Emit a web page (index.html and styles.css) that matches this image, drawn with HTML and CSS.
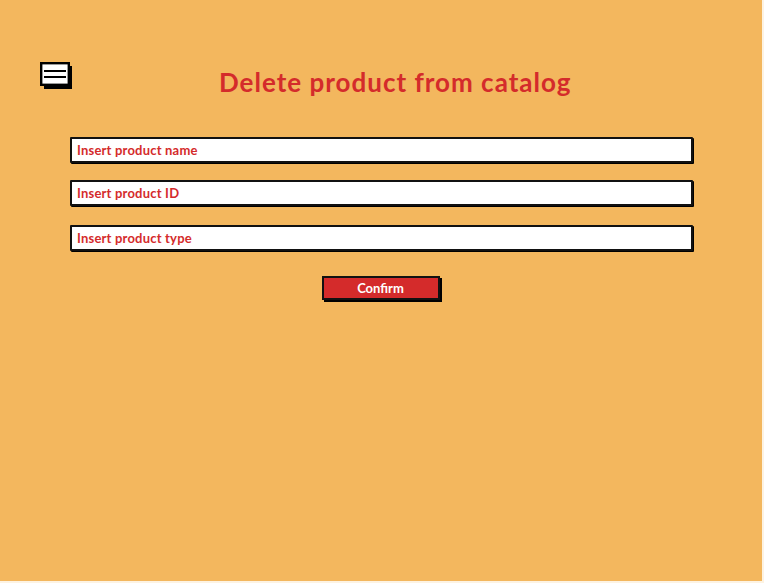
FILE: index.html
```html
<!DOCTYPE html>
<html>
<head>
<meta charset="utf-8">
<link rel="stylesheet" href="styles.css">
</head>
<body>
<div class="screen">
  <div class="header">
    <svg class="menu" width="32" height="27" viewBox="0 0 32 27">
      <rect x="4" y="4" width="28" height="23" fill="#000"/>
      <rect x="1.2" y="1.2" width="27.6" height="21.6" fill="#fff" stroke="#000" stroke-width="2.4"/>
      <rect x="4" y="8" width="22" height="2" fill="#000"/>
      <rect x="4" y="14" width="22" height="2" fill="#000"/>
    </svg>
    <h1 class="title">Delete product from catalog</h1>
  </div>
  <div class="form">
    <div class="field">Insert product name</div>
    <div class="field">Insert product ID</div>
    <div class="field">Insert product type</div>
    <div class="actions"><button class="confirm">Confirm</button></div>
  </div>
</div>
</body>
</html>
```
FILE: styles.css
```css
html, body {
  margin: 0;
  padding: 0;
  background: #fdf3e3;
}
.screen {
  width: 762px;
  height: 581px;
  background: #f3b75e;
  box-sizing: border-box;
  padding-top: 62px;
  font-family: Lato, "Open Sans", sans-serif;
}
.header {
  display: flex;
  align-items: center;
  height: 27px;
}
.menu {
  margin-left: 40px;
  flex: none;
}
.title {
  margin: 0 0 0 147px;
  font-size: 26px;
  font-weight: 700;
  letter-spacing: 1px;
  color: #d42b2b;
  line-height: 30px;
  position: relative;
  top: 6px;
}
.form {
  margin: 48px 0 0 70px;
  width: 623px;
  display: flex;
  flex-direction: column;
  gap: 17px;
}
.field {
  height: 22px;
  border: 2px solid #111;
  box-shadow: 1px 1px 0 #000;
  background: #fff;
  color: #d42b2b;
  font-size: 13px;
  font-weight: 700;
  letter-spacing: 0.2px;
  line-height: 22px;
  padding-left: 5px;
  border-radius: 1px;
}
.field + .field + .field {
  margin-top: 2px;
}
.actions {
  display: flex;
  justify-content: center;
  margin-top: 8px;
  margin-right: 2px;
}
.confirm {
  width: 118px;
  height: 24px;
  background: #d42b2b;
  border: 2px solid #111;
  box-shadow: 2px 2px 0 #000;
  color: #fff;
  font-family: Lato, "Open Sans", sans-serif;
  font-weight: 700;
  font-size: 13px;
  padding: 0;
}
```
